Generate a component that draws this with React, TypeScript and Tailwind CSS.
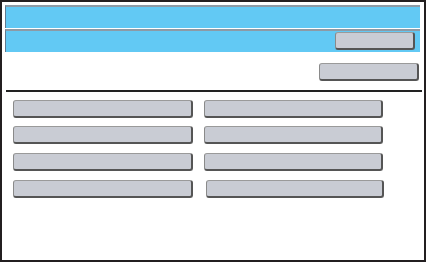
import React from "react";

function Btn({ className = "" }: { className?: string }) {
  return (
    <div
      className={
        "h-[18px] rounded-[3px] bg-[#c9ccd4] border-t border-l border-r-2 border-b-2 border-t-[#9a9a9a] border-l-[#8a8a8a] border-r-[#555] border-b-[#555] " +
        className
      }
    />
  );
}

export default function App() {
  const rowMargins = ["mt-0", "mt-[8px]", "mt-[9px]", "mt-[9px]"];
  return (
    <div className="w-[426px] h-[262px] border-2 border-[#231f20] bg-white flex flex-col font-['Liberation_Sans',sans-serif] overflow-hidden">
      <div className="pt-[3px] pl-[3px] pr-[4px] flex flex-col gap-[1px]">
        <div className="h-[23px] bg-[#62c9f4] border-t-2 border-l border-t-[#8d9aa5] border-l-[#5f7a90]" />
        <div className="h-[23px] bg-[#62c9f4] border-t-2 border-l border-t-[#8d9aa5] border-l-[#5f7a90] flex items-start justify-end pr-[5px] pt-[1px]">
          <Btn className="w-[80px]" />
        </div>
      </div>
      <div className="h-[38px] flex items-start justify-end pr-[5px] pt-[11px]">
        <Btn className="w-[100px]" />
      </div>
      <div className="ml-[4px] mr-[2px] h-[2px] bg-[#222]" />
      <div className="pl-[11px] pt-[8px] flex flex-col">
        {[0, 1, 2, 3].map((i) => (
          <div key={i} className={"flex " + rowMargins[i]}>
            <Btn className="w-[180px]" />
            <Btn className={i === 3 ? "w-[178px] ml-[13px]" : "w-[179px] ml-[11px]"} />
          </div>
        ))}
      </div>
    </div>
  );
}
